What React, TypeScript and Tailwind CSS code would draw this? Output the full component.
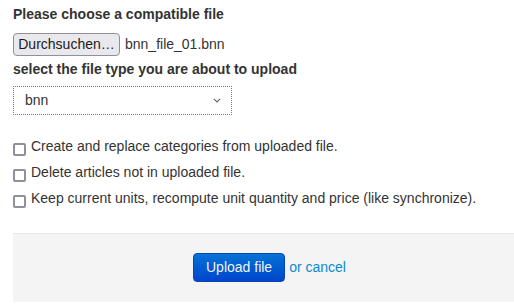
import React from "react";

const options = [
  "Create and replace categories from uploaded file.",
  "Delete articles not in uploaded file.",
  "Keep current units, recompute unit quantity and price (like synchronize).",
];

function Checkbox() {
  return (
    <span className="mt-[7px] mr-[5px] block h-[13px] w-[13px] shrink-0 rounded-[2px] border-2 border-[#8f8f9d] bg-white" />
  );
}

export default function App() {
  return (
    <div className="min-h-[306px] bg-white pt-1 text-[14px] text-[#333] font-['Liberation_Sans',Arial,sans-serif]">
      <div className="pl-[13px]">
        <div className="font-bold leading-[20px]">Please choose a compatible file</div>

        <div className="mt-[9px] flex items-center">
          <button
            type="button"
            className="flex h-[23px] w-[107px] items-center justify-center rounded-[4px] border border-[#8f8f9d] bg-[#e9e9ed] text-[14px] text-[#1b1b1b]"
          >
            Durchsuchen…
          </button>
          <span className="ml-[5px] text-[#333]">bnn_file_01.bnn</span>
        </div>

        <div className="mt-[3px] font-bold leading-[20px]">select the file type you are about to upload</div>

        <div className="mt-[7px] flex h-[29px] w-[219px] items-center justify-between border border-dotted border-[#7a7a7a] bg-white pl-[11px] pr-[10px]">
          <span>bnn</span>
          <svg width="8" height="5" viewBox="0 0 8 5" fill="none">
            <path d="M0.8 0.8l3.2 3.2L7.2 0.8" stroke="#666" strokeWidth="1.1" />
          </svg>
        </div>

        <div className="mt-[21px] flex flex-col gap-[6px]">
          {options.map((text) => (
            <label key={text} className="flex items-start leading-[20px]">
              <Checkbox />
              <span>{text}</span>
            </label>
          ))}
        </div>
      </div>

      <div className="mt-[25px] ml-[13px] border-t border-[#e5e5e5] bg-[#f4f4f4] pt-[19px] pb-[20px] pl-[180px]">
        <button
          type="button"
          className="h-[29px] rounded-[4px] border border-[#0645b8] bg-gradient-to-b from-[#0a72d6] to-[#0044cc] px-3 text-[14px] text-[#f2f2f2]"
        >
          Upload file
        </button>
        <a href="#" className="ml-[4px] text-[#0a8ad0]">
          or cancel
        </a>
      </div>
    </div>
  );
}
